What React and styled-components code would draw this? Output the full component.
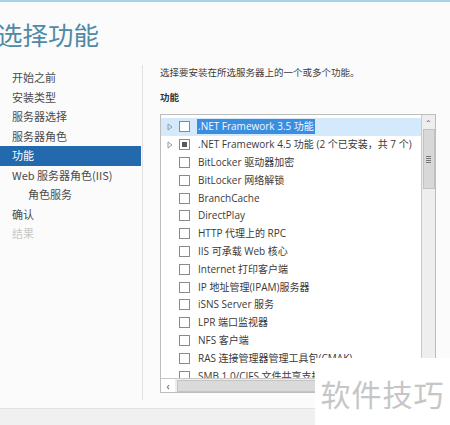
import React from "react";
import styled, { createGlobalStyle } from "styled-components";

const Global = createGlobalStyle`
  html, body { margin: 0; padding: 0; }
  body {
    background: #fbfbfb;
    font-family: "Noto Sans", "Noto Sans CJK SC", sans-serif;
    color: #3a3a3a;
  }
`;

const Page = styled.div`
  position: relative;
  width: 450px;
  height: 425px;
  overflow: hidden;
  display: flex;
  flex-direction: column;
  background: #fbfbfb;
`;

const TopLine = styled.div`
  height: 2px;
  background: #a8d2e8;
  flex: none;
`;

const Title = styled.h1`
  margin: 17px 0 0 -3px;
  height: 30px;
  font-family: "Noto Sans CJK SC", sans-serif;
  font-weight: 400;
  font-size: 25.5px;
  line-height: 30px;
  color: #4f8aa6;
  flex: none;
  white-space: nowrap;
`;

const Main = styled.div`
  display: grid;
  grid-template-columns: 143px 1fr;
  margin-top: 16px;
  flex: 1;
  min-height: 0;
`;

const Nav = styled.nav`
  border-right: 1px solid #e2e2e2;
  padding-top: 3px;
  margin-bottom: 8px;
`;

const NavItem = styled.div`
  height: 19.5px;
  line-height: 19.5px;
  padding-left: ${(p) => (p.$indent ? 28 : 12)}px;
  font-size: 11px;
  font-family: "Noto Sans CJK SC", sans-serif;
  color: ${(p) => (p.$active ? "#ffffff" : p.$muted ? "#c8c8c8" : "#4a4a4a")};
  background: ${(p) => (p.$active ? "#2369ad" : "transparent")};
  margin-right: ${(p) => (p.$active ? "1px" : "0")};
`;

const Content = styled.div`
  padding-left: 17px;
  display: flex;
  flex-direction: column;
`;

const Desc = styled.div`
  font-size: 9.5px;
  line-height: 14px;
  color: #3c3c3c;
  font-family: "Noto Sans CJK SC", sans-serif;
`;

const Label = styled.div`
  margin-top: 11px;
  font-size: 9.5px;
  line-height: 14px;
  font-weight: 700;
  color: #333;
  font-family: "Noto Sans CJK SC", sans-serif;
`;

const ListBox = styled.div`
  margin-top: 10px;
  width: 276px;
  height: 279px;
  box-sizing: border-box;
  border: 1px solid #bdbdbd;
  background: #ffffff;
  display: grid;
  grid-template-columns: 1fr 14px;
  grid-template-rows: 1fr 14px;
`;

const Rows = styled.div`
  overflow: hidden;
  padding-top: 3px;
`;

const Row = styled.div`
  height: 17.8px;
  display: flex;
  align-items: center;
  background: ${(p) => (p.$sel ? "#d4e9fb" : "transparent")};
  font-size: 10px;
  color: #3a3a3a;
  white-space: nowrap;
`;

const Expander = styled.span`
  width: 18px;
  flex: none;
  display: flex;
  justify-content: center;
`;

const Check = styled.span`
  width: 9px;
  height: 9px;
  flex: none;
  border: 1px solid #8a8a8a;
  background: #fff;
  display: flex;
  align-items: center;
  justify-content: center;
  margin-right: 7px;
`;

const Partial = styled.span`
  width: 5px;
  height: 5px;
  background: #5a5a5a;
`;

const Text = styled.span`
  padding: 1px 1px;
  background: ${(p) => (p.$sel ? "#3a8ee0" : "transparent")};
  color: ${(p) => (p.$sel ? "#f4f9ff" : "#3a3a3a")};
  font-family: "Open Sans", "Noto Sans CJK SC", sans-serif;
  font-size: 10px;
  line-height: 13px;
`;

const VScroll = styled.div`
  border-left: 1px solid #c8c8c8;
  background: #eeeeee;
  display: flex;
  flex-direction: column;
  align-items: center;
`;

const Arrow = styled.div`
  height: 14px;
  width: 100%;
  display: flex;
  align-items: center;
  justify-content: center;
  font-size: 8px;
  color: #555;
  flex: none;
`;

const VThumb = styled.div`
  width: 12px;
  height: 60px;
  box-sizing: border-box;
  background: #d8d8d8;
  border: 1px solid #c2c2c2;
  display: flex;
  align-items: center;
  justify-content: center;
`;

const Grip = styled.div`
  width: ${(p) => (p.$h ? 7 : 5)}px;
  height: ${(p) => (p.$h ? 5 : 7)}px;
  background: repeating-linear-gradient(
    ${(p) => (p.$h ? "90deg" : "0deg")},
    #777 0 1px,
    transparent 1px 2px
  );
`;

const HScroll = styled.div`
  border-top: 1px solid #c8c8c8;
  background: #eeeeee;
  display: flex;
  align-items: center;
`;

const HArrow = styled.div`
  width: 14px;
  height: 100%;
  display: flex;
  align-items: center;
  justify-content: center;
  font-size: 10px;
  color: #555;
  flex: none;
  background: #fff;
`;

const HThumb = styled.div`
  margin-left: 2px;
  width: 240px;
  height: 12px;
  box-sizing: border-box;
  background: #dadada;
  border: 1px solid #c4c4c4;
  display: flex;
  align-items: center;
  justify-content: flex-end;
  padding-right: 10px;
`;

const Corner = styled.div`
  background: #eeeeee;
  border-top: 1px solid #c8c8c8;
  border-left: 1px solid #c8c8c8;
`;

const Footer = styled.div`
  height: 16px;
  flex: none;
  background: #f0f0f0;
  border-top: 1px solid #e2e2e2;
`;

const Watermark = styled.div`
  position: absolute;
  right: 0;
  bottom: 0;
  width: 135px;
  height: 67px;
  background: #ffffff;
  display: flex;
  align-items: center;
  justify-content: center;
  font-family: "Noto Sans CJK SC", sans-serif;
  font-size: 30px;
  color: #c6c6c6;
  letter-spacing: 1px;
  padding-top: 2px;
  box-sizing: border-box;
`;

const Tri = () => (
  <svg width="6" height="8" viewBox="0 0 6 8">
    <path d="M1 1 L5 4 L1 7 Z" fill="none" stroke="#9a9a9a" strokeWidth="1" />
  </svg>
);

const features = [
  { t: ".NET Framework 3.5 功能", exp: true, sel: true },
  { t: ".NET Framework 4.5 功能 (2 个已安装，共 7 个)", exp: true, partial: true },
  { t: "BitLocker 驱动器加密" },
  { t: "BitLocker 网络解锁" },
  { t: "BranchCache" },
  { t: "DirectPlay" },
  { t: "HTTP 代理上的 RPC" },
  { t: "IIS 可承载 Web 核心" },
  { t: "Internet 打印客户端" },
  { t: "IP 地址管理(IPAM)服务器" },
  { t: "iSNS Server 服务" },
  { t: "LPR 端口监视器" },
  { t: "NFS 客户端" },
  { t: "RAS 连接管理器管理工具包(CMAK)" },
  { t: "SMB 1.0/CIFS 文件共享支持" },
];

const navItems = [
  { t: "开始之前" },
  { t: "安装类型" },
  { t: "服务器选择" },
  { t: "服务器角色" },
  { t: "功能", active: true },
  { t: "Web 服务器角色(IIS)" },
  { t: "角色服务", indent: true },
  { t: "确认" },
  { t: "结果", muted: true },
];

export default function App() {
  return (
    <Page>
      <Global />
      <TopLine />
      <Title>选择功能</Title>
      <Main>
        <Nav>
          {navItems.map((n) => (
            <NavItem key={n.t} $active={n.active} $muted={n.muted} $indent={n.indent}>
              {n.t}
            </NavItem>
          ))}
        </Nav>
        <Content>
          <Desc>选择要安装在所选服务器上的一个或多个功能。</Desc>
          <Label>功能</Label>
          <ListBox>
            <Rows>
              {features.map((f) => (
                <Row key={f.t} $sel={f.sel}>
                  <Expander>{f.exp ? <Tri /> : null}</Expander>
                  <Check>{f.partial ? <Partial /> : null}</Check>
                  <Text $sel={f.sel}>{f.t}</Text>
                </Row>
              ))}
            </Rows>
            <VScroll>
              <Arrow>⌃</Arrow>
              <VThumb>
                <Grip />
              </VThumb>
            </VScroll>
            <HScroll>
              <HArrow>‹</HArrow>
              <HThumb>
                <Grip $h />
              </HThumb>
            </HScroll>
            <Corner />
          </ListBox>
        </Content>
      </Main>
      <Footer />
      <Watermark>软件技巧</Watermark>
    </Page>
  );
}
